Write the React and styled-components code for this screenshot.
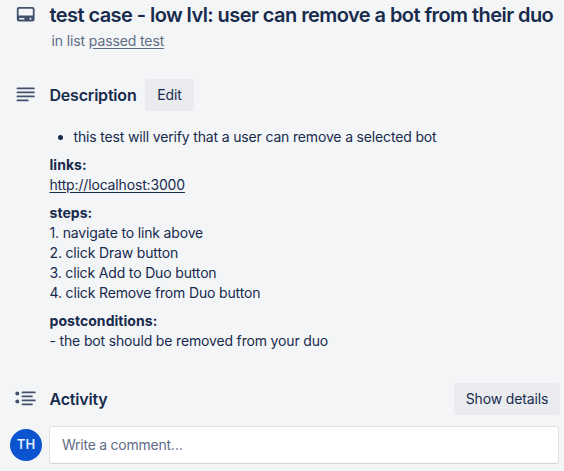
import React from "react";
import styled, { createGlobalStyle } from "styled-components";

const Global = createGlobalStyle`
  * { box-sizing: border-box; }
  body { margin: 0; background: #f4f5f7; color: #172b4d; overflow: hidden;
    font: 14px/20px Inter, "Noto Sans", sans-serif; letter-spacing: -0.16px; }
`;
const Page = styled.main`
  width: 564px; height: 471px; overflow: hidden; background: #f4f5f7;
  display: flex; flex-direction: column;
`;
const Row = styled.section`
  display: grid; grid-template-columns: 49.5px 1fr; height: ${(p) => p.$h}px; flex: none;
  align-items: ${(p) => p.$align || "center"};
`;
const Icon = styled.svg`
  display: block; width: 24px; height: 24px; margin: ${(p) => p.$m || "0 0 0 14px"};
  fill: #42526e; stroke: #42526e; stroke-width: 0;
`;
const Lines = styled.path`
  fill: none; stroke-width: 1.9px; stroke-linecap: round;
`;
const Title = styled.h1`
  margin: 3px 0 0; font-size: 20px; line-height: 24px; font-weight: 600; white-space: nowrap;
  letter-spacing: -0.57px;
`;
const Link = styled.span`
  text-decoration: underline; text-underline-offset: 2px;
`;
const InList = styled.p`
  margin: 4px 0 0 2px; color: #5e6c84; letter-spacing: -0.12px;
`;
const Heading = styled.h2`
  margin: 0; font-size: 16px; line-height: 20px; font-weight: 600; letter-spacing: -0.2px;
`;
const HeadBar = styled.div`
  display: flex; align-items: center; justify-content: ${(p) => (p.$spread ? "space-between" : "flex-start")};
  gap: 8.5px; padding-right: 4px;
`;
const Button = styled.button`
  width: ${(p) => p.$w}px; height: 32px; border: 0; border-radius: 3px; padding: 0;
  background: #eaebef; color: #172b4d; font: inherit; letter-spacing: -0.14px;
  display: flex; align-items: center; justify-content: center;
`;
const Body = styled.div`
  margin: 16px 0 0 49.5px; height: 256px; flex: none;
`;
const Bullets = styled.ul`
  margin: 0 0 8px; padding: 0; list-style: none;
  li { display: flex; align-items: center; padding-left: 8.5px; gap: 10.5px; }
  li::before { content: ""; width: 5px; height: 5px; border-radius: 50%; background: #172b4d; }
`;
const Para = styled.p`
  margin: 0 0 8px;
`;
const Label = styled.strong`
  display: block; font-weight: 700; letter-spacing: 0.05px;
`;
const TextLine = styled.span`
  display: block; white-space: nowrap;
`;
const Avatar = styled.div`
  width: 32px; height: 32px; margin-left: 10px; padding-bottom: 2px; border-radius: 50%;
  background: #0c53cf; color: #deebff; letter-spacing: 0;
  display: flex; align-items: center; justify-content: center; font-size: 13px; font-weight: 600;
`;
const Comment = styled.div`
  height: 38px; margin: 0 5px 0 -0.5px; padding: 0 12px; background: #fff; border-radius: 3px;
  border: 1px solid #dfe1e6; border-bottom-color: #d0d4db; color: #5e6c84; display: flex; align-items: center;
  letter-spacing: -0.25px;
`;

const steps = ["1. navigate to link above", "2. click Draw button", "3. click Add to Duo button", "4. click Remove from Duo button"];

export default function App() {
  return (
    <Page>
      <Global />
      <Row $h={79} $align="start">
        <Icon viewBox="0 0 24 24" $m="2px 0 0 14px">
          <path fillRule="evenodd" d="M5 5h13.4a2.2 2.2 0 0 1 2.2 2.2v10a2.2 2.2 0 0 1-2.2 2.2H5a2.2 2.2 0 0 1-2.2-2.2v-10A2.2 2.2 0 0 1 5 5zM5.2 6.8a.6.6 0 0 0-.6.6v6.2h14.2V7.4a.6.6 0 0 0-.6-.6zM5.2 16v1.4h5.2V16zM16.5 15.7a1 1 0 1 0 0 2 1 1 0 0 0 0-2z" />
        </Icon>
        <div>
          <Title>test case - low lvl: user can remove a bot from their duo</Title>
          <InList>in list <Link>passed test</Link></InList>
        </div>
      </Row>
      <Row $h={32}>
        <Icon viewBox="0 0 24 24"><Lines d="M3.5 5.4h16.4M3.5 9.4h16.4M3.5 13.4h16.4M3.5 17.4h10.2" /></Icon>
        <HeadBar><Heading>Description</Heading><Button $w={49}>Edit</Button></HeadBar>
      </Row>
      <Body>
        <Bullets><li>this test will verify that a user can remove a selected bot</li></Bullets>
        <Para><Label>links:</Label><TextLine><Link>http://localhost:3000</Link></TextLine></Para>
        <Para><Label>steps:</Label>{steps.map((s) => <TextLine key={s}>{s}</TextLine>)}</Para>
        <Para><Label>postconditions:</Label><TextLine>- the bot should be removed from your duo</TextLine></Para>
      </Body>
      <Row $h={32}>
        <Icon viewBox="0 0 24 24">
          <circle cx="3.3" cy="6.4" r="2" /><circle cx="3.3" cy="14.4" r="2" />
          <Lines d="M8.5 5.4h12.3M8.5 9.4h9.4M8.5 13.4h12.3M8.5 17.4h9.4" />
        </Icon>
        <HeadBar $spread><Heading>Activity</Heading><Button $w={106}>Show details</Button></HeadBar>
      </Row>
      <Row $h={60}>
        <Avatar>TH</Avatar>
        <Comment>Write a comment…</Comment>
      </Row>
    </Page>
  );
}
